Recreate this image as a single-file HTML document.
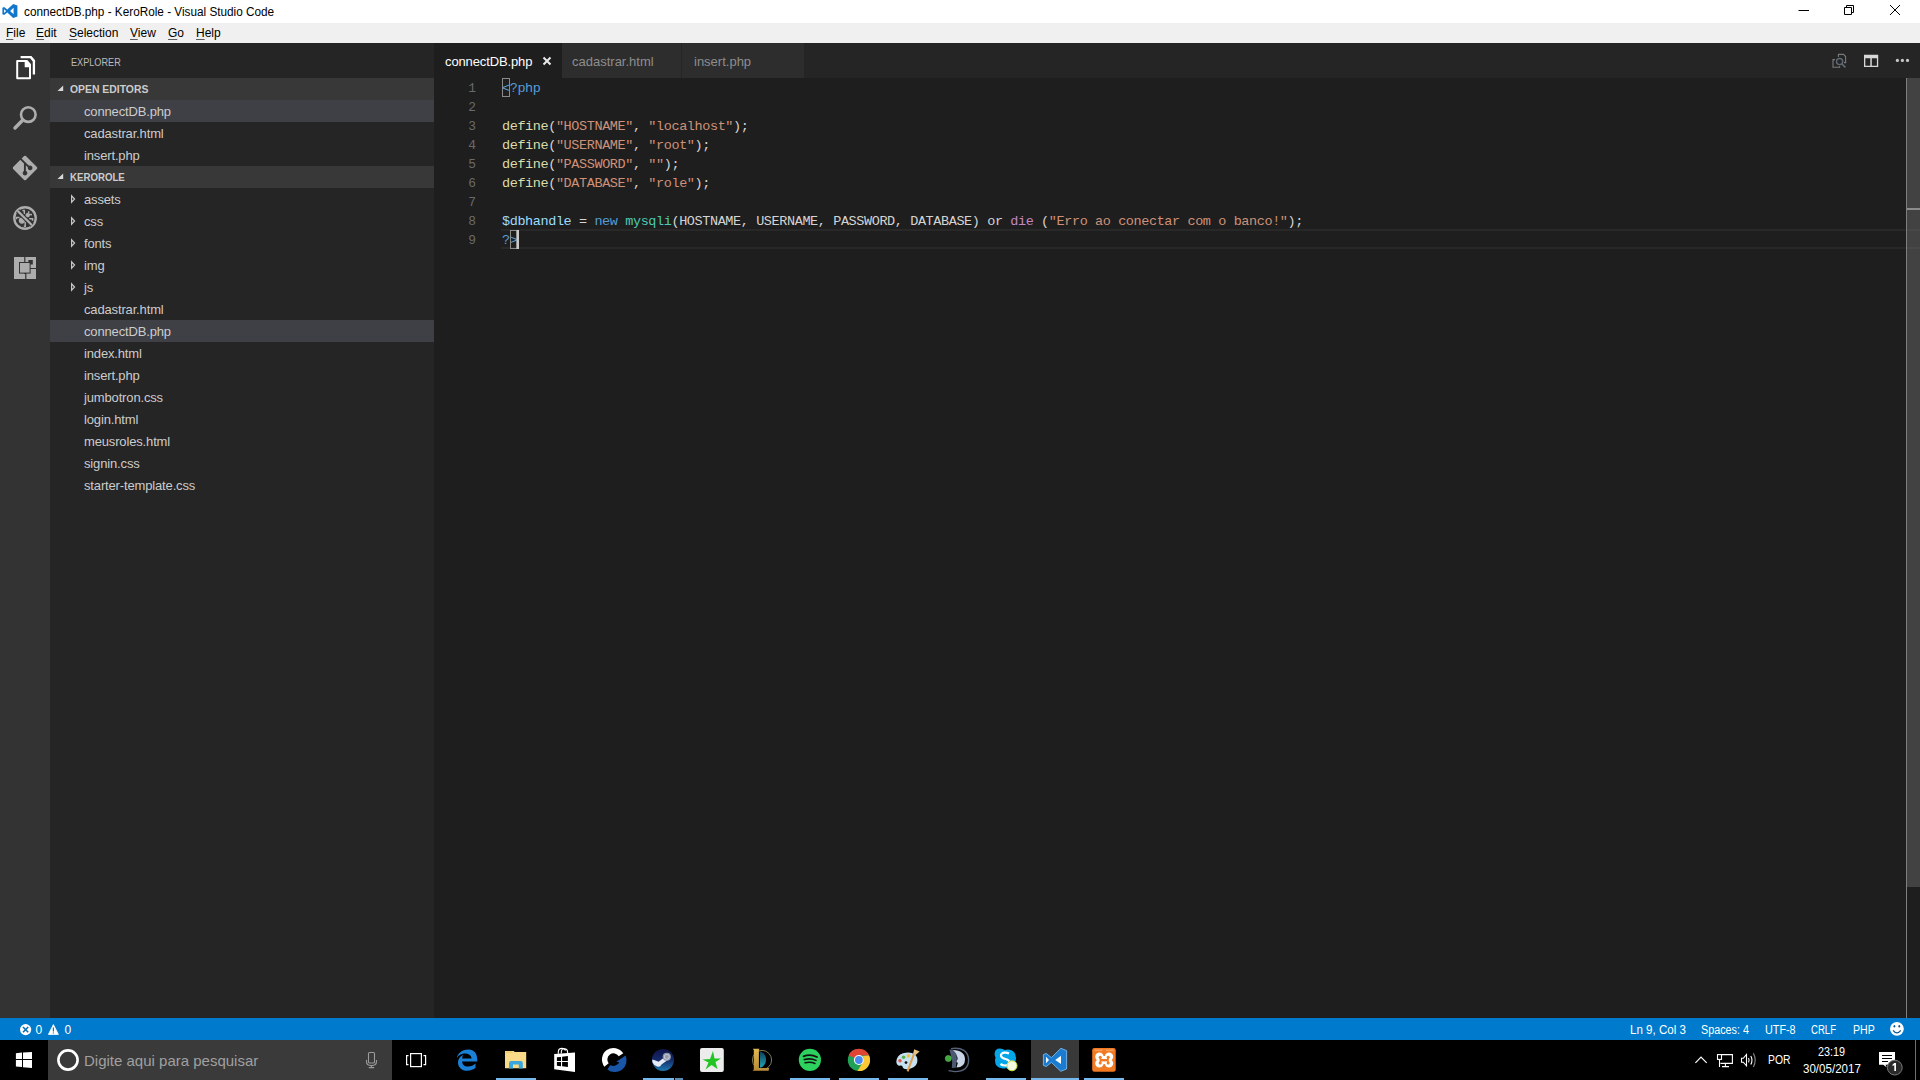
<!DOCTYPE html>
<html><head><meta charset="utf-8">
<style>
html,body{margin:0;padding:0;width:1920px;height:1080px;overflow:hidden;background:#1e1e1e;font-family:"Liberation Sans",sans-serif;}
div,span{box-sizing:border-box;}
.a{position:absolute;}
.t{position:absolute;white-space:pre;line-height:1;}
#title{left:0;top:0;width:1920px;height:23px;background:#ffffff;}
#menu{left:0;top:23px;width:1920px;height:20px;background:#f0f0f0;}
#act{left:0;top:43px;width:50px;height:975px;background:#333333;}
#side{left:50px;top:43px;width:384px;height:975px;background:#252526;}
#tabs{left:434px;top:43px;width:1486px;height:35px;background:#252526;}
#editor{left:434px;top:78px;width:1486px;height:940px;background:#1e1e1e;}
#status{left:0;top:1018px;width:1920px;height:22px;background:#007acc;}
#task{left:0;top:1040px;width:1920px;height:40px;background:#000000;}
.mi{font-size:12px;color:#000;top:27px;}
.mi u{text-decoration:underline;text-decoration-thickness:1px;text-underline-offset:2px;text-decoration-color:#606060;}
.row{position:absolute;left:50px;width:384px;height:22px;}
.sel{background:#3f3f46;}
.hdr{background:#383838;}
.fi{position:absolute;left:84px;font-size:13px;letter-spacing:-0.15px;color:#cccccc;white-space:pre;line-height:1;}
.code{position:absolute;left:502px;font-family:"Liberation Mono",monospace;font-size:13.5px;letter-spacing:-0.4px;white-space:pre;line-height:19px;color:#d4d4d4;}
.ln{position:absolute;left:440px;width:36px;text-align:right;font-family:"Liberation Mono",monospace;font-size:12.83px;line-height:19px;color:#6a6a6a;}
.sb{font-size:12px;color:#fff;top:1024px;}
</style></head><body>
<div id="title" class="a"></div>
<div id="menu" class="a"></div>
<div id="act" class="a"></div>
<div id="side" class="a"></div>
<div id="tabs" class="a"></div>
<div id="editor" class="a"></div>
<div id="status" class="a"></div>
<div id="task" class="a"></div>

<!-- title -->
<div class="t" style="left:23.5px;top:6px;font-size:12px;color:#000;transform:scaleX(0.98);transform-origin:0 0;">connectDB.php - KeroRole - Visual Studio Code</div>

<!-- menu -->
<div class="t mi" style="left:6px;"><u>F</u>ile</div>
<div class="t mi" style="left:36px;"><u>E</u>dit</div>
<div class="t mi" style="left:69px;"><u>S</u>election</div>
<div class="t mi" style="left:130px;"><u>V</u>iew</div>
<div class="t mi" style="left:168px;"><u>G</u>o</div>
<div class="t mi" style="left:196px;"><u>H</u>elp</div>

<!-- sidebar -->
<div class="t" style="left:70.5px;top:57px;font-size:11px;color:#bbbbbb;transform:scaleX(0.83);transform-origin:0 0;">EXPLORER</div>
<div class="row hdr" style="top:78px;"></div>
<div class="t" style="left:70px;top:85px;font-size:10.4px;font-weight:bold;color:#cccccc;">OPEN EDITORS</div>
<div class="row sel" style="top:100px;"></div>
<div class="fi" style="top:105px;">connectDB.php</div>
<div class="fi" style="top:127px;">cadastrar.html</div>
<div class="fi" style="top:149px;">insert.php</div>
<div class="row hdr" style="top:166px;"></div>
<div class="t" style="left:70px;top:173px;font-size:10.4px;font-weight:bold;color:#cccccc;transform:scaleX(0.93);transform-origin:0 0;">KEROROLE</div>
<div class="fi" style="top:193px;">assets</div>
<div class="fi" style="top:215px;">css</div>
<div class="fi" style="top:237px;">fonts</div>
<div class="fi" style="top:259px;">img</div>
<div class="fi" style="top:281px;">js</div>
<div class="fi" style="top:303px;">cadastrar.html</div>
<div class="row sel" style="top:320px;"></div>
<div class="fi" style="top:325px;">connectDB.php</div>
<div class="fi" style="top:347px;">index.html</div>
<div class="fi" style="top:369px;">insert.php</div>
<div class="fi" style="top:391px;">jumbotron.css</div>
<div class="fi" style="top:413px;">login.html</div>
<div class="fi" style="top:435px;">meusroles.html</div>
<div class="fi" style="top:457px;">signin.css</div>
<div class="fi" style="top:479px;">starter-template.css</div>

<!-- tabs -->
<div class="a" style="left:434px;top:43px;width:128px;height:35px;background:#1e1e1e;"></div>
<div class="a" style="left:562px;top:43px;width:119px;height:35px;background:#2d2d2d;"></div>
<div class="a" style="left:681px;top:43px;width:123px;height:35px;background:#2d2d2d;border-left:1px solid #252526;"></div>
<div class="t" style="left:445px;top:55px;font-size:13px;color:#ffffff;letter-spacing:-0.12px;">connectDB.php</div>
<div class="t" style="left:572px;top:55px;font-size:13px;color:#8e8e8e;">cadastrar.html</div>
<div class="t" style="left:694px;top:55px;font-size:13px;color:#8e8e8e;">insert.php</div>

<!-- editor -->
<div class="a" style="left:501px;top:229px;width:1419px;height:20px;border-top:2px solid #282828;border-bottom:2px solid #282828;"></div>
<div class="ln" style="top:79px;">1<br>2<br>3<br>4<br>5<br>6<br>7<br>8<br>9</div>
<div class="code" style="top:79px;"><span style="color:#569cd6">&lt;?php</span>

<span style="color:#dcdcaa">define</span>(<span style="color:#ce9178">"HOSTNAME"</span>, <span style="color:#ce9178">"localhost"</span>);
<span style="color:#dcdcaa">define</span>(<span style="color:#ce9178">"USERNAME"</span>, <span style="color:#ce9178">"root"</span>);
<span style="color:#dcdcaa">define</span>(<span style="color:#ce9178">"PASSWORD"</span>, <span style="color:#ce9178">""</span>);
<span style="color:#dcdcaa">define</span>(<span style="color:#ce9178">"DATABASE"</span>, <span style="color:#ce9178">"role"</span>);

<span style="color:#9cdcfe">$dbhandle</span> = <span style="color:#569cd6">new</span> <span style="color:#4ec9b0">mysqli</span>(HOSTNAME, USERNAME, PASSWORD, DATABASE) or <span style="color:#c586c0">die</span> (<span style="color:#ce9178">"Erro ao conectar com o banco!"</span>);
<span style="color:#569cd6">?&gt;</span></div>

<!-- scrollbar -->
<div class="a" style="left:1907px;top:78px;width:13px;height:809px;background:rgba(121,121,121,0.4);"></div>
<div class="a" style="left:1906px;top:78px;width:1px;height:940px;background:#7f7f7f;"></div>
<div class="a" style="left:1907px;top:208px;width:13px;height:2px;background:#8c8c8c;"></div>

<!-- status -->
<div class="t sb" style="left:1630px;transform:scaleX(0.965);transform-origin:0 0;">Ln 9, Col 3</div>
<div class="t sb" style="left:1700.8px;transform:scaleX(0.9);transform-origin:0 0;">Spaces: 4</div>
<div class="t sb" style="left:1765px;transform:scaleX(0.9);transform-origin:0 0;">UTF-8</div>
<div class="t sb" style="left:1811.3px;transform:scaleX(0.8);transform-origin:0 0;">CRLF</div>
<div class="t sb" style="left:1852.5px;transform:scaleX(0.88);transform-origin:0 0;">PHP</div>
<div class="t sb" style="left:35.5px;">0</div>
<div class="t sb" style="left:64.5px;">0</div>

<!-- taskbar -->
<div class="a" style="left:48px;top:1040px;width:344px;height:40px;background:#3a3a3a;"></div>
<div class="t" style="left:84px;top:1053px;font-size:15px;color:#a0a0a0;">Digite aqui para pesquisar</div>
<div class="t" style="left:1767.5px;top:1054px;font-size:12px;color:#fff;transform:scaleX(0.865);transform-origin:0 0;">POR</div>
<div class="t" style="left:1818px;top:1045.5px;font-size:12px;color:#fff;transform:scaleX(0.9);transform-origin:0 0;">23:19</div>
<div class="t" style="left:1803px;top:1063px;font-size:12px;color:#fff;transform:scaleX(0.963);transform-origin:0 0;">30/05/2017</div>

<svg class="a" style="left:0;top:0;" width="1920" height="1080" viewBox="0 0 1920 1080">
<!-- vs logo title -->
<path fill="#1177cc" fill-rule="evenodd" d="M13.2,3.9 L17.4,5.6 V16.5 L13.2,18.1 L7.3,12.6 L4.1,15 L2.4,14.2 V7.8 L4.1,7 L7.3,9.5 Z M4.1,9.2 V12.9 L6.1,11 Z M13.6,7.7 L10.1,11 L13.6,14.3 Z"/>
<!-- window controls -->
<path stroke="#000" stroke-width="1" fill="none" d="M1798.5,10.5 H1809 M1844.5,7.5 H1851.5 V14.5 H1844.5 Z M1846.5,7.5 V5.5 H1853.5 V12.5 H1851.5 M1890,5 L1900,15 M1900,5 L1890,15"/>
<!-- activity: files -->
<g fill="none" stroke="#ffffff" stroke-width="2" stroke-linejoin="round">
<path d="M17.2,61 H26.6 L30,64.8 V78.2 H17.2 Z"/>
<path d="M20.6,57.1 H30.6 L33.9,60.9 V74.4" stroke-width="2.3"/>
</g>
<path fill="#ffffff" d="M24.7,60 H27 L31,64.3 V67.2 H24.7 Z"/>
<!-- search -->
<g stroke="#adadad" fill="none">
<circle cx="28.3" cy="114.6" r="7.3" stroke-width="2.6"/>
<path d="M22.6,120.3 L15,128" stroke-width="3.5" stroke-linecap="round"/>
</g>
<!-- git -->
<path fill="#adadad" stroke="#adadad" stroke-width="2.5" stroke-linejoin="round" d="M25,157 L36,168 L25,179 L14,168 Z"/>
<g stroke="#333333" fill="#333333">
<path d="M20.4,158.6 L24.9,163.2 V173" stroke-width="1.9" fill="none"/>
<path d="M24.9,163.2 L30,167.9" stroke-width="1.9" fill="none"/>
<circle cx="25" cy="173.1" r="1.9"/>
<circle cx="30.1" cy="167.9" r="1.9"/>
</g>
<!-- debug -->
<circle cx="25" cy="218" r="10.75" stroke="#adadad" stroke-width="2.3" fill="none"/>
<g fill="#adadad">
<circle cx="21.9" cy="220.6" r="3.1"/>
<circle cx="27.6" cy="215.2" r="2.2"/>
</g>
<g stroke="#adadad" stroke-width="1.5" fill="none">
<path d="M22.4,210.4 H24.3 V214"/>
<path d="M28.6,211.2 V213.6"/>
<path d="M28.6,214.6 H32"/>
<path d="M29.1,218.8 H32.6 V220.8"/>
<path d="M16.4,219.2 V217.6 H19.6"/>
<path d="M25.2,222 V226.2 H23.8"/>
</g>
<path d="M17.6,210.9 L32,225.3" stroke="#333333" stroke-width="4.4"/>
<path d="M17.6,210.9 L32,225.3" stroke="#adadad" stroke-width="2.2"/>
<!-- extensions -->
<g fill="#adadad">
<rect x="14" y="257" width="10.2" height="22"/>
<rect x="14" y="274" width="11.2" height="5"/>
<rect x="25.4" y="257" width="10.6" height="11"/>
<rect x="26.4" y="269" width="9.6" height="10"/>
</g>
<rect x="28.4" y="260" width="4.4" height="4.5" fill="#333333"/>
<rect x="19" y="262" width="11.6" height="11.6" fill="#333333"/>
<rect x="20" y="263" width="9.6" height="9.6" fill="#adadad"/>
</svg>

<svg class="a" style="left:0;top:0;" width="1920" height="1080" viewBox="0 0 1920 1080">
<!-- files back fold -->
<path fill="#ffffff" d="M29.5,55.9 H31.2 L35.1,60.4 V62 L33,61.5 Z"/>
<!-- tab close -->
<path stroke="#e8e8e8" stroke-width="2" d="M543.5,57.5 L550.5,64.5 M550.5,57.5 L543.5,64.5"/>
<!-- editor toolbar: open changes -->
<g fill="none" stroke="#7a7a7a" stroke-width="1.1">
<path d="M1838.4,57 V54.4 H1843.5 L1845.6,56.5 V62.6 H1844"/>
<path d="M1835,59.6 H1833 V67.2 H1839.6 V66"/>
</g>
<g fill="none" stroke="#5f6a75" stroke-width="1.3">
<circle cx="1839.6" cy="61.6" r="3.1"/>
<path d="M1841.8,63.9 L1845.4,67.4" stroke-width="1.6"/>
</g>
<!-- split editor -->
<path fill="#d8d8d8" fill-rule="evenodd" d="M1864,54.8 H1878.2 V67 H1864 Z M1865.3,58.2 V65.7 H1870.3 V58.2 Z M1871.8,58.2 V65.7 H1876.9 V58.2 Z"/>
<!-- more -->
<g fill="#c8c8c8"><circle cx="1897.4" cy="60.4" r="1.6"/><circle cx="1902.4" cy="60.4" r="1.6"/><circle cx="1907.5" cy="60.4" r="1.6"/></g>
<!-- sidebar triangles -->
<path fill="#d8d8d8" d="M57.5,91 L63.2,91 L63.2,85.5 Z"/>
<path fill="#d8d8d8" d="M57.5,179 L63.2,179 L63.2,173.5 Z"/>
<g fill="none" stroke="#c5c5c5" stroke-width="1.2" stroke-linejoin="miter">
<path d="M71.6,195.8 V202.2 L74.6,199 Z"/>
<path d="M71.6,217.8 V224.2 L74.6,221 Z"/>
<path d="M71.6,239.8 V246.2 L74.6,243 Z"/>
<path d="M71.6,261.8 V268.2 L74.6,265 Z"/>
<path d="M71.6,283.8 V290.2 L74.6,287 Z"/>
</g>
<!-- bracket match + cursor -->
<rect x="502.5" y="78.5" width="7" height="18" fill="none" stroke="#8a8a8a" stroke-width="1"/>
<rect x="510.5" y="230.5" width="6.5" height="18" fill="none" stroke="#8a8a8a" stroke-width="1"/>
<rect x="516.5" y="230" width="2.5" height="19" fill="#c8c8c8"/>
<!-- status icons -->
<circle cx="25.6" cy="1029.6" r="5.6" fill="#ffffff"/>
<path stroke="#0a6fb8" stroke-width="1.6" d="M23,1027 L28.2,1032.2 M28.2,1027 L23,1032.2"/>
<path fill="#ffffff" stroke="#ffffff" stroke-width="0.8" stroke-linejoin="round" d="M48.4,1034.4 H58.4 L53.4,1024.6 Z"/>
<path stroke="#0a6fb8" stroke-width="1.2" d="M53.4,1027.5 V1031.6 M53.4,1032.5 V1033.6"/>
<circle cx="1896.9" cy="1028.8" r="6.9" fill="#ffffff"/>
<ellipse cx="1894.4" cy="1026.2" rx="0.9" ry="1.3" fill="#0a5a9a"/>
<ellipse cx="1899.3" cy="1026.2" rx="0.9" ry="1.3" fill="#0a5a9a"/>
<path d="M1893,1030.4 Q1896.9,1035.4 1900.8,1030.4" stroke="#0a5a9a" stroke-width="1.3" fill="none"/>
</svg>

<svg class="a" style="left:0;top:1040px;" width="1920" height="40" viewBox="0 1040 1920 40">
<!-- windows logo -->
<g fill="#ffffff">
<path d="M15.9,1053.3 L22,1052.6 V1059 H15.9 Z"/>
<path d="M23,1052.4 L32,1051.9 V1059 H23 Z"/>
<path d="M15.9,1060 H22 V1067.1 L15.9,1066.4 Z"/>
<path d="M23,1060 H32 V1068.1 L23,1067.3 Z"/>
</g>
<!-- cortana -->
<circle cx="68" cy="1060" r="9.6" fill="none" stroke="#ffffff" stroke-width="2.6"/>
<!-- mic -->
<g fill="none" stroke="#9a9a9a" stroke-width="1.1">
<rect x="368.5" y="1052.5" width="6" height="10.5" rx="1"/>
<path d="M366.5,1060 V1061.5 Q366.5,1065.6 371.5,1065.6 Q376.5,1065.6 376.5,1061.5 V1060"/>
<path d="M371.5,1065.6 V1067.5 M368.8,1067.6 H374.2"/>
</g>
<!-- task view -->
<g fill="none" stroke="#ffffff" stroke-width="1.2">
<rect x="410.6" y="1053.6" width="10.8" height="13"/>
<path d="M408.5,1055.6 H406.6 V1064.6 H408.5 M423.5,1055.6 H425.6 V1064.6 H423.5"/>
</g>
<!-- edge -->
<path fill="#1a7fd6" d="M468.5,1049.5 C461,1049.5 457.2,1054.5 457,1058 C459,1054.8 462,1053.6 464.6,1053.6 C468.5,1053.6 471.2,1055.5 471.6,1058.5 H462.2 C462.2,1055.8 463.5,1054.8 464.6,1054.5 C460.5,1055.5 458,1059 458,1062.5 C458,1067.5 462,1070.8 467,1070.8 C470.6,1070.8 473.5,1069.4 475.5,1067.8 V1063.6 C473.6,1065.4 471,1066.6 468,1066.6 C464.5,1066.6 462.2,1064.6 462.1,1061.6 H477.2 V1059.6 C477.2,1053.8 474.3,1049.5 468.5,1049.5 Z"/>
<!-- explorer -->
<path fill="#f8da88" d="M505,1051.1 H513.6 L514.8,1052 H526.2 V1068.2 H505 Z"/>
<path fill="#eac060" d="M505.5,1051.6 H512.5 V1052.6 H505.5 Z"/>
<path fill="#3aa6de" d="M509,1063 Q509,1060.9 511.2,1060.9 H520.6 Q522.8,1060.9 522.8,1063 V1068.6 H518.8 V1064.4 H513 V1068.6 H509 Z"/>
<rect x="496" y="1078" width="40" height="2" fill="#76b9ed"/>
<!-- store -->
<path fill="none" stroke="#ffffff" stroke-width="1.1" d="M558.3,1053.8 V1052 Q558.3,1048.4 562,1048.4 Q564.5,1048.4 565.5,1050.5 M561.3,1053.5 V1052 Q561.3,1049 564.5,1048.8 Q567.6,1049 567.6,1052 V1053.2"/>
<path fill="#ffffff" fill-rule="evenodd" d="M554.2,1054.1 L575,1052.6 V1071.9 L554.2,1069.2 Z M556.9,1057.3 L561,1056.9 V1060.9 H556.9 Z M562.1,1056.8 L567.9,1056 V1060.9 H562.1 Z M556.9,1062 H561 V1066.2 L556.9,1065.8 Z M562.1,1062 H567.9 V1067 L562.1,1066.3 Z"/>
<!-- G icon -->
<path fill="none" stroke="#ffffff" stroke-width="5.4" d="M621,1054.7 A8.9,8.9 0 1 0 606.5,1065"/>
<path fill="#1a56a8" d="M625.6,1055.5 A11.9,11.9 0 0 1 607.35,1069.6 L610.3,1064.9 A6.2,6.2 0 0 0 619.3,1062.2 L616.3,1061.8 Z"/>
<!-- steam -->
<defs><linearGradient id="stg" x1="0" y1="0" x2="0" y2="1"><stop offset="0" stop-color="#0e1448"/><stop offset="0.5" stop-color="#152a6a"/><stop offset="1" stop-color="#1d7ab0"/></linearGradient></defs>
<circle cx="663" cy="1059.9" r="11" fill="url(#stg)"/>
<path fill="#e8eaf4" d="M652.3,1059.6 Q655.5,1060.6 658.6,1061.8 L663.2,1058.2 L667.5,1060.2 Q664,1062.5 661.5,1064.6 Q660.2,1067.5 657.2,1066.6 Q653.4,1065.2 652.3,1062 Z"/>
<circle cx="666.8" cy="1056.8" r="3.5" fill="#c8ccd8" stroke="#8a96a8" stroke-width="1.2"/>
<circle cx="666.8" cy="1056.8" r="2" fill="#9a9aa8"/>
<rect x="643" y="1078" width="31" height="2" fill="#76b9ed"/>
<rect x="675" y="1078" width="8" height="2" fill="#5a8db5"/>
<!-- green star -->
<rect x="700" y="1048" width="23.8" height="24" rx="2" fill="#ececec"/>
<path fill="#22c422" d="M713,1051 L714.5,1058.5 L721,1058.5 L715.5,1062 L717.5,1069 L711.5,1065 L705.5,1069.5 L708.5,1062.5 L702.5,1059.5 L710,1059 Z"/>
<!-- lol -->
<defs><linearGradient id="lolg" x1="0" y1="0" x2="0" y2="1"><stop offset="0" stop-color="#0c3f5c"/><stop offset="1" stop-color="#22a4b4"/></linearGradient>
<linearGradient id="lolgold" x1="0" y1="0" x2="0" y2="1"><stop offset="0" stop-color="#e0b850"/><stop offset="1" stop-color="#b88a38"/></linearGradient></defs>
<circle cx="762" cy="1060" r="9.6" fill="none" stroke="#7a7a58" stroke-width="1"/>
<path fill="url(#lolg)" d="M760,1051.4 A8.6,8.6 0 0 1 760,1067.8 Z"/>
<path fill="url(#lolgold)" d="M752.8,1048.7 H759.4 L758.9,1050 V1068 H769.2 L768.6,1070.8 H752.6 L753.8,1069.6 V1050 Z"/>
<!-- spotify -->
<circle cx="809.9" cy="1059.8" r="11.1" fill="#2dd25e"/>
<g fill="none" stroke="#111" stroke-linecap="round">
<path d="M803.5,1056.3 Q810.5,1053.8 817,1057" stroke-width="1.8"/>
<path d="M804.3,1059.6 Q810.5,1057.8 816,1060.4" stroke-width="1.6"/>
<path d="M805,1062.8 Q810.5,1061.4 815,1063.5" stroke-width="1.4"/>
</g>
<rect x="790" y="1078" width="40" height="2" fill="#76b9ed"/>
<!-- chrome -->
<circle cx="858.9" cy="1060" r="11.1" fill="#21a058"/>
<path fill="#e04434" d="M848.6,1055.6 A11.1,11.1 0 0 1 869.1,1055.5 H858.9 A4.5,4.5 0 0 0 854.9,1058 Z"/>
<path fill="#fcc934" d="M869.1,1055.5 A11.1,11.1 0 0 1 857.5,1071 L862.8,1062.3 A4.5,4.5 0 0 0 862.5,1056 Z"/>
<circle cx="858.9" cy="1060" r="5" fill="#ffffff"/>
<circle cx="858.9" cy="1060" r="3.9" fill="#4a89f0"/>
<rect x="839" y="1078" width="40" height="2" fill="#76b9ed"/>
<!-- paint -->
<path fill="#c6e2f2" d="M896.3,1062 Q896.5,1055.5 903,1053.3 Q910,1051.2 915,1054.5 Q918.2,1057.5 917.2,1062.5 Q915.5,1068.5 907,1069.3 Q903.5,1069.5 902.8,1067.6 Q902.6,1065.2 900.6,1065.6 Q897.2,1066.6 896.3,1062 Z"/>
<circle cx="900" cy="1060.8" r="1.8" fill="#e05a48"/>
<circle cx="903.6" cy="1057.3" r="1.8" fill="#58b048"/>
<circle cx="908.5" cy="1055.8" r="1.9" fill="#f0c040"/>
<circle cx="906" cy="1062.6" r="1.4" fill="#111"/>
<path stroke="#e0a050" stroke-width="2" d="M907.6,1071.4 L914,1053.8"/>
<path fill="#e8c080" d="M913,1054 L914.2,1049.2 L919.6,1051.6 L915.6,1055 Z"/>
<rect x="888" y="1078" width="40" height="2" fill="#76b9ed"/>
<!-- teamspeak -->
<path fill="none" stroke="#56627a" stroke-width="1.4" d="M951,1048.6 Q968,1046.5 968.6,1060 Q968.5,1071.5 955,1071.6 L948.5,1070.6"/>
<path fill="#4a5870" d="M949.5,1049.5 L953.5,1049.8 Q957.5,1055 956.8,1060 L955.8,1067.8 L951.8,1068 Q953,1062 951.2,1057 Z"/>
<path fill="#cad4e8" d="M953,1050 Q965,1050.6 965,1059.5 Q965,1067.2 956.5,1067.6 L957.8,1063 L956.4,1061.5 L957.6,1059 Q957.2,1054 953,1050 Z"/>
<circle cx="948.3" cy="1058.5" r="3" fill="#3aa83a" stroke="#70c070" stroke-width="0.6"/>
<!-- skype -->
<path fill="#05a6e8" d="M1000,1048.5 Q994.6,1048.5 994.6,1054 Q994.6,1056 995.6,1057.5 Q995,1059 995,1060.5 Q995,1068 1003,1068.5 Q1005,1068.5 1006.5,1068 Q1008,1070 1010.5,1070 Q1016.3,1070 1016.3,1064.5 Q1016.3,1062.5 1015.5,1061 Q1016,1059.5 1016,1058 Q1016,1050 1008,1049.5 Q1006,1049.5 1004.5,1050 Q1003,1048.5 1000,1048.5 Z"/>
<path fill="none" stroke="#ffffff" stroke-width="2.2" d="M1009,1053.5 Q1006.5,1052.3 1004.5,1052.6 Q1000.5,1053.3 1001,1056 Q1001.5,1058 1005.5,1059 Q1009.5,1060 1009.5,1062.5 Q1009,1065.5 1005,1065.5 Q1002.5,1065.5 1000.5,1064"/>
<circle cx="1012" cy="1065.8" r="5" fill="#f4f8e0" stroke="#c8e040" stroke-width="1"/>
<rect x="986" y="1078" width="40" height="2" fill="#76b9ed"/>
<!-- vscode active -->
<rect x="1031" y="1040" width="48" height="40" fill="#393939"/>
<path fill="#1a7bd0" stroke="#7ab8e8" stroke-width="0.9" stroke-linejoin="round" d="M1060.8,1048.3 L1066.6,1050.6 V1069 L1060.8,1071.3 L1051.4,1062.4 L1046.2,1066.6 L1043.4,1065.4 V1054.6 L1046.2,1053.4 L1051.4,1057.6 Z"/>
<path fill="#f4faff" d="M1046,1056.8 V1063.2 L1049,1060 Z M1061,1055.8 L1055.2,1060 L1061,1064 Z"/>
<rect x="1031" y="1078" width="48" height="2" fill="#76b9ed"/>
<!-- xampp -->
<rect x="1092.2" y="1048" width="23.5" height="23.8" rx="2.2" fill="#f27a22"/>
<rect x="1094.5" y="1049.5" width="19" height="1.5" fill="#f8a060"/>
<g fill="#ffffff">
<circle cx="1099.4" cy="1056.7" r="4.2"/><circle cx="1109" cy="1056.7" r="4.2"/>
<circle cx="1099.4" cy="1063.4" r="4.2"/><circle cx="1109" cy="1063.4" r="4.2"/>
<rect x="1097" y="1056" width="14.5" height="8"/>
</g>
<g fill="#f27a22">
<circle cx="1104.2" cy="1051.8" r="2.3"/><circle cx="1104.2" cy="1068.3" r="2.3"/>
<circle cx="1100.2" cy="1057.3" r="1.5"/><circle cx="1100.2" cy="1063" r="1.5"/>
<circle cx="1108.2" cy="1057.3" r="1.5"/><circle cx="1108.2" cy="1063" r="1.5"/>
<rect x="1099.6" y="1057.3" width="1.6" height="5.7"/><rect x="1107.2" y="1057.3" width="1.6" height="5.7"/>
<rect x="1100.5" y="1059" width="7.5" height="2.4"/>
</g>
<rect x="1084" y="1078" width="40" height="2" fill="#76b9ed"/>
<!-- tray -->
<path fill="none" stroke="#ffffff" stroke-width="1.2" d="M1695.4,1062.8 L1701,1057 L1706.7,1062.8"/>
<g fill="none" stroke="#ffffff" stroke-width="1.1">
<path d="M1721.6,1054.6 H1732.4 V1063.4 H1720.4"/>
<rect x="1717.5" y="1054.6" width="4" height="4.8"/>
<path d="M1719.5,1059.4 V1067 M1725.4,1063.4 V1066.5 M1722,1066.6 H1729"/>
</g>
<g fill="none" stroke="#ffffff" stroke-width="1.1">
<path d="M1741.5,1058.3 H1743.3 L1746.5,1054.5 V1065.8 L1743.3,1062.2 H1741.5 Z"/>
<path d="M1748.5,1058 Q1749.8,1060.2 1748.5,1062.4"/>
<path d="M1750.8,1055.9 Q1753.2,1060.2 1750.8,1064.5"/>
</g>
<path fill="none" stroke="#8a8a8a" stroke-width="1.1" d="M1753.4,1053.3 Q1757,1060.2 1753.4,1067"/>
<!-- notifications -->
<path fill="#ffffff" d="M1879,1052 H1895 V1064.8 H1885.5 L1886.8,1067.4 L1883.3,1064.8 H1879 Z"/>
<g stroke="#000" stroke-width="1"><path d="M1882,1055.5 H1892 M1882,1058.5 H1892 M1882,1061.5 H1888"/></g>
<circle cx="1894.8" cy="1067.6" r="7.4" fill="#2a2a2a" stroke="#7a7a7a" stroke-width="1"/>
<path fill="#ffffff" d="M1894.3,1063 H1896 V1071 H1894.3 V1065 L1892.6,1066.2 V1064.6 Z"/>
<rect x="1915" y="1040" width="1" height="40" fill="#707070"/>
</svg>
</body></html>
